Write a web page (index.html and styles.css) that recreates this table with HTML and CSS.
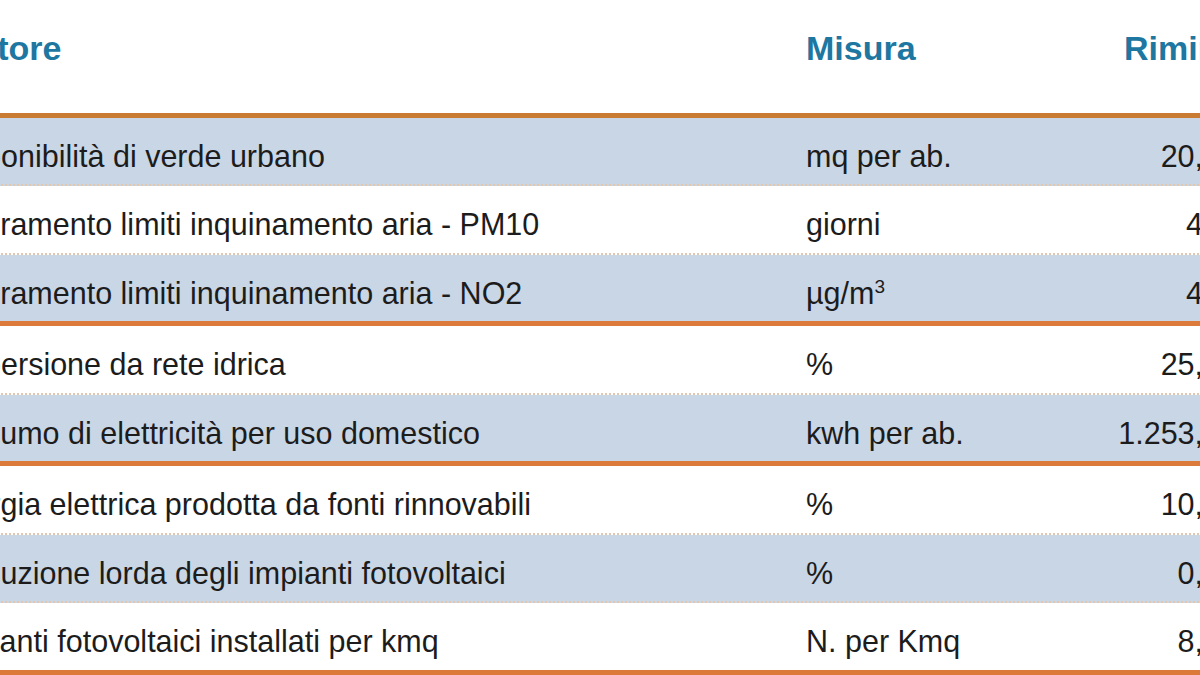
FILE: index.html
```html
<!DOCTYPE html>
<html lang="it">
<head>
<meta charset="utf-8">
<title>Indicatori ambientali</title>
<link rel="stylesheet" href="styles.css">
</head>
<body>
<div class="sheet">
  <div class="row head">
    <div class="c1">Indicatore</div>
    <div class="c2">Misura</div>
    <div class="c3">Rimini</div>
  </div>
  <div class="group">
    <div class="row blue">
      <div class="c1">Disponibilità di verde urbano</div>
      <div class="c2">mq per ab.</div>
      <div class="c3">20,5</div>
    </div>
    <div class="row white">
      <div class="c1 wide">Superamento limiti inquinamento aria - PM10</div>
      <div class="c2">giorni</div>
      <div class="c3">45</div>
    </div>
    <div class="row blue">
      <div class="c1 wide">Superamento limiti inquinamento aria - NO2</div>
      <div class="c2">µg/m<sup>3</sup></div>
      <div class="c3">41</div>
    </div>
  </div>
  <div class="group">
    <div class="row white">
      <div class="c1">Dispersione da rete idrica</div>
      <div class="c2">%</div>
      <div class="c3">25,6</div>
    </div>
    <div class="row blue">
      <div class="c1 wide">Consumo di elettricità per uso domestico</div>
      <div class="c2">kwh per ab.</div>
      <div class="c3">1.253,1</div>
    </div>
  </div>
  <div class="group">
    <div class="row white">
      <div class="c1 mid">Energia elettrica prodotta da fonti rinnovabili</div>
      <div class="c2">%</div>
      <div class="c3">10,8</div>
    </div>
    <div class="row blue">
      <div class="c1 mid">Produzione lorda degli impianti fotovoltaici</div>
      <div class="c2">%</div>
      <div class="c3">0,5</div>
    </div>
    <div class="row white">
      <div class="c1 narrow">Impianti fotovoltaici installati per kmq</div>
      <div class="c2">N. per Kmq</div>
      <div class="c3">8,9</div>
    </div>
  </div>
</div>
</body>
</html>
```
FILE: styles.css
```css
html, body {
  margin: 0;
  padding: 0;
  background: #ffffff;
  overflow: hidden;
}
body {
  width: 1200px;
  height: 675px;
  font-family: "Liberation Sans", Arial, sans-serif;
  color: #1c1c1c;
}
.sheet {
  margin-left: -110px;
  width: 1340px;
}
.row {
  display: flex;
  font-size: 30.5px;
  line-height: 30px;
  white-space: nowrap;
}
.row > div {
  box-sizing: border-box;
  padding-top: 23px;
  overflow: hidden;
}
.c1 { width: 890px; padding-left: 50px; }
.c2 { width: 310px; padding-left: 26px; }
.c3 { width: 140px; padding-right: 10px; text-align: right; }

/* the first column is cut by the left edge of the picture at different letters */
.c1.wide { text-indent: -11px; }
.c1.mid { text-indent: -4px; }
.c1.narrow { text-indent: 2px; }

.head {
  height: 113px;
  border-bottom: 5px solid #c97b33;
  font-size: 34px;
  line-height: 34px;
  font-weight: bold;
  color: #1d77a1;
}
.head > div { padding-top: 31px; }
.head .c1 { padding-left: 9px; }
.head .c3 { text-align: left; padding-left: 34px; padding-right: 0; }

.blue { background: #c9d6e6; height: 66px; }
.white { background: #ffffff; height: 67px; }
.group .row { border-bottom: 2px dotted #e2c6ae; }
.group .row:last-child { border-bottom: none; }
.group { border-bottom: 5px solid #dc7a3b; }

sup {
  font-size: 19px;
  line-height: 0;
  vertical-align: 11px;
}
```
